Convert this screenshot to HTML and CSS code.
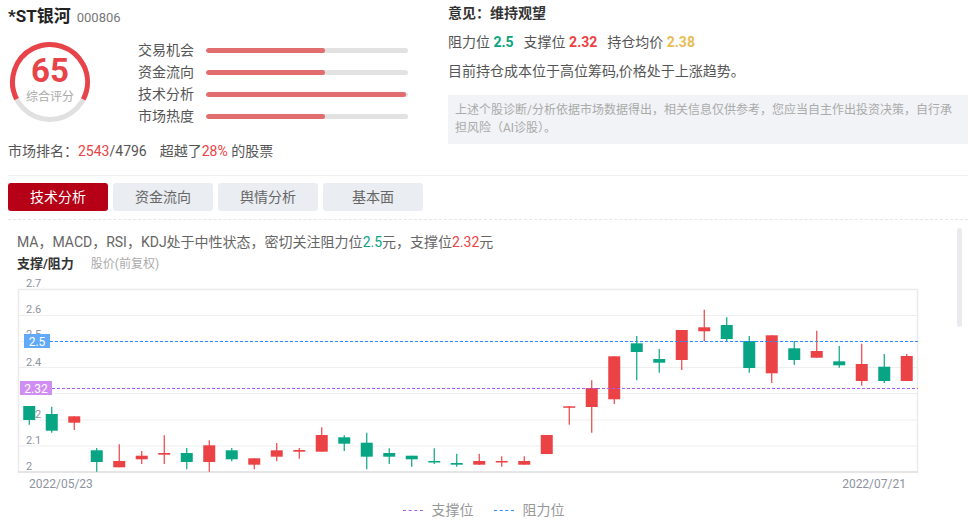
FILE: index.html
```html
<!doctype html>
<html>
<head>
    <meta charset="utf-8"/>
    <title>*ST银河 个股诊断</title>
    <link rel="stylesheet" href="styles.css">
</head>
<body>
<div class="page">

    <div class="summary">
        <div class="summary-left">
            <h1 class="stock-name">*ST银河<span class="stock-code">000806</span></h1>
            <div class="score-row">
                <svg class="gauge" viewBox="0 0 84 84">
                    <circle cx="42" cy="42" r="37.5" class="gauge-bg"/>
                    <circle cx="42" cy="42" r="37.5" class="gauge-val" stroke-dasharray="153.2 300" transform="rotate(153 42 42)"/>
                    <text x="42" y="42" class="gauge-num">65</text>
                    <text x="42" y="61" class="gauge-txt">综合评分</text>
                </svg>
                <ul class="score-list">
                    <li><label>交易机会</label><span class="bar"><i style="width:59%"></i></span></li>
                    <li><label>资金流向</label><span class="bar"><i style="width:59%"></i></span></li>
                    <li><label>技术分析</label><span class="bar"><i style="width:99%"></i></span></li>
                    <li><label>市场热度</label><span class="bar"><i style="width:59%"></i></span></li>
                </ul>
            </div>
            <p class="rank">市场排名：<span class="red">2543</span>/4796<span class="rank-beat">超越了<span class="red">28%</span> 的股票</span></p>
        </div>

        <div class="summary-right">
            <p class="opinion">意见：维持观望</p>
            <p class="levels">阻力位 <b class="green">2.5</b>支撑位 <b class="red">2.32</b>持仓均价 <b class="yellow">2.38</b></p>
            <p class="desc">目前持仓成本位于高位筹码,价格处于上涨趋势。</p>
            <div class="notice">上述个股诊断/分析依据市场数据得出，相关信息仅供参考，您应当自主作出投资决策，自行承担风险（AI诊股）。</div>
        </div>
    </div>

    <div class="tabs">
        <span class="tab active">技术分析</span>
        <span class="tab">资金流向</span>
        <span class="tab">舆情分析</span>
        <span class="tab">基本面</span>
    </div>

    <div class="panel">
        <p class="panel-tip">MA，MACD，RSI，KDJ处于中性状态，密切关注阻力位<span class="green">2.5</span>元，支撑位<span class="red">2.32</span>元</p>
        <h3 class="chart-title">支撑/阻力<span>股价(前复权)</span></h3>

        <svg class="kline" viewBox="8 274 940 221">
            <!-- grid -->
            <g class="grid">
                <line x1="18" y1="315.5" x2="918" y2="315.5"/>
                <line x1="18" y1="341.5" x2="918" y2="341.5"/>
                <line x1="18" y1="367.5" x2="918" y2="367.5"/>
                <line x1="18" y1="393.5" x2="918" y2="393.5"/>
                <line x1="18" y1="420" x2="918" y2="420"/>
                <line x1="18" y1="446" x2="918" y2="446"/>
            </g>
            <rect class="frame" x="18.5" y="289.5" width="899" height="182.5"/>
            <line class="axis" x1="18" y1="472" x2="918" y2="472"/>

            <g class="ylabel">
                <text x="26" y="287">2.7</text>
                <text x="26" y="313">2.6</text>
                <text x="26" y="338">2.5</text>
                <text x="26" y="365.5">2.4</text>
                <text x="26" y="418">2.2</text>
                <text x="26" y="444">2.1</text>
                <text x="26" y="470">2</text>
            </g>
            <g class="xlabel">
                <text x="29" y="488">2022/05/23</text>
                <text x="906" y="488" text-anchor="end">2022/07/21</text>
            </g>

            <!-- candles: rise = red, fall = green -->
            <g class="fall"><line x1="29.25" y1="406" x2="29.25" y2="424.7"/><rect x="23.25" y="406" width="12" height="14"/></g>
            <g class="fall"><line x1="51.75" y1="406.7" x2="51.75" y2="432.7"/><rect x="45.75" y="414" width="12" height="16.7"/></g>
            <g class="rise"><line x1="74.25" y1="416.3" x2="74.25" y2="430"/><rect x="68.25" y="416.3" width="12" height="6.4"/></g>
            <g class="fall"><line x1="96.75" y1="448" x2="96.75" y2="471.7"/><rect x="90.75" y="450.3" width="12" height="11.7"/></g>
            <g class="rise"><line x1="119.25" y1="444.3" x2="119.25" y2="467.3"/><rect x="113.25" y="461" width="12" height="6.3"/></g>
            <g class="rise"><line x1="141.75" y1="451" x2="141.75" y2="464"/><rect x="135.75" y="455.7" width="12" height="3.6"/></g>
            <g class="rise"><line x1="164.25" y1="435.3" x2="164.25" y2="464"/><rect x="158.25" y="453" width="12" height="1.7"/></g>
            <g class="fall"><line x1="186.75" y1="448" x2="186.75" y2="469.3"/><rect x="180.75" y="453" width="12" height="9"/></g>
            <g class="rise"><line x1="209.25" y1="440.3" x2="209.25" y2="471.7"/><rect x="203.25" y="445.3" width="12" height="16.7"/></g>
            <g class="fall"><line x1="231.75" y1="448" x2="231.75" y2="461.3"/><rect x="225.75" y="450.3" width="12" height="9"/></g>
            <g class="rise"><line x1="254.25" y1="458.3" x2="254.25" y2="469.3"/><rect x="248.25" y="458.3" width="12" height="6.4"/></g>
            <g class="rise"><line x1="276.75" y1="443" x2="276.75" y2="461.3"/><rect x="270.75" y="450.3" width="12" height="6.4"/></g>
            <g class="rise"><line x1="299.25" y1="448" x2="299.25" y2="458.7"/><rect x="293.25" y="450" width="12" height="1.7"/></g>
            <g class="rise"><line x1="321.75" y1="427.3" x2="321.75" y2="451.7"/><rect x="315.75" y="435" width="12" height="16.7"/></g>
            <g class="fall"><line x1="344.25" y1="435.3" x2="344.25" y2="451"/><rect x="338.25" y="437.3" width="12" height="6.4"/></g>
            <g class="fall"><line x1="366.75" y1="432.7" x2="366.75" y2="469.3"/><rect x="360.75" y="442.7" width="12" height="14"/></g>
            <g class="fall"><line x1="389.25" y1="448.3" x2="389.25" y2="464"/><rect x="383.25" y="453" width="12" height="3.7"/></g>
            <g class="fall"><line x1="411.75" y1="455.7" x2="411.75" y2="466.7"/><rect x="405.75" y="455.7" width="12" height="3.6"/></g>
            <g class="fall"><line x1="434.25" y1="448.3" x2="434.25" y2="464"/><rect x="428.25" y="461" width="12" height="1.5"/></g>
            <g class="fall"><line x1="456.75" y1="453.7" x2="456.75" y2="466.7"/><rect x="450.75" y="463" width="12" height="1.7"/></g>
            <g class="rise"><line x1="479.25" y1="453.7" x2="479.25" y2="464.7"/><rect x="473.25" y="461" width="12" height="3.7"/></g>
            <g class="rise"><line x1="501.75" y1="456.3" x2="501.75" y2="466.7"/><rect x="495.75" y="461" width="12" height="1.5"/></g>
            <g class="rise"><line x1="524.25" y1="456.3" x2="524.25" y2="464.7"/><rect x="518.25" y="461" width="12" height="3.7"/></g>
            <g class="rise"><rect x="540.75" y="435" width="12" height="19"/></g>
            <g class="rise"><line x1="569.25" y1="406.3" x2="569.25" y2="424.7"/><rect x="563.25" y="406.3" width="12" height="1.5"/></g>
            <g class="rise"><line x1="591.75" y1="380.3" x2="591.75" y2="432.7"/><rect x="585.75" y="388" width="12" height="19"/></g>
            <g class="rise"><line x1="614.25" y1="356.3" x2="614.25" y2="404"/><rect x="608.25" y="356.3" width="12" height="43"/></g>
            <g class="fall"><line x1="636.75" y1="336" x2="636.75" y2="380.3"/><rect x="630.75" y="343.3" width="12" height="8.7"/></g>
            <g class="fall"><line x1="659.25" y1="349" x2="659.25" y2="372.7"/><rect x="653.25" y="359" width="12" height="3.7"/></g>
            <g class="rise"><line x1="681.75" y1="330" x2="681.75" y2="370"/><rect x="675.75" y="330" width="12" height="30"/></g>
            <g class="rise"><line x1="704.25" y1="309.7" x2="704.25" y2="341.3"/><rect x="698.25" y="327.3" width="12" height="4"/></g>
            <g class="fall"><line x1="726.75" y1="317.3" x2="726.75" y2="341.3"/><rect x="720.75" y="325" width="12" height="14"/></g>
            <g class="fall"><line x1="749.25" y1="336" x2="749.25" y2="372.7"/><rect x="743.25" y="341" width="12" height="27"/></g>
            <g class="rise"><line x1="771.75" y1="335.3" x2="771.75" y2="383"/><rect x="765.75" y="335.3" width="12" height="38"/></g>
            <g class="fall"><line x1="794.25" y1="341" x2="794.25" y2="365"/><rect x="788.25" y="348.3" width="12" height="11.7"/></g>
            <g class="rise"><line x1="816.75" y1="330.7" x2="816.75" y2="357.7"/><rect x="810.75" y="351" width="12" height="6.7"/></g>
            <g class="fall"><line x1="839.25" y1="346" x2="839.25" y2="367.7"/><rect x="833.25" y="361.3" width="12" height="4"/></g>
            <g class="rise"><line x1="861.75" y1="343.7" x2="861.75" y2="385.7"/><rect x="855.75" y="364" width="12" height="17"/></g>
            <g class="fall"><line x1="884.25" y1="354" x2="884.25" y2="383"/><rect x="878.25" y="366.7" width="12" height="14.3"/></g>
            <g class="rise"><line x1="906.75" y1="354" x2="906.75" y2="381"/><rect x="900.75" y="356" width="12" height="25"/></g>

            <!-- support / resistance -->
            <line class="line-resist" x1="50" y1="341.5" x2="918" y2="341.5"/>
            <line class="line-support" x1="52" y1="388.5" x2="918" y2="388.5"/>
            <rect class="tag-resist" x="24" y="334" width="26" height="14"/>
            <text class="tag-text" x="37" y="345.5">2.5</text>
            <rect class="tag-support" x="20" y="381" width="32" height="14"/>
            <text class="tag-text" x="36" y="392.5">2.32</text>
        </svg>

        <div class="legend">
            <span class="legend-item"><i class="dash dash-support"></i>支撑位</span>
            <span class="legend-item"><i class="dash dash-resist"></i>阻力位</span>
        </div>

        <div class="scroll-thumb"></div>
    </div>

</div>
</body>
</html>
```

FILE: styles.css
```css
*{margin:0;padding:0;box-sizing:border-box}
body{font-family:Roboto,"Noto Sans CJK SC",sans-serif;font-size:14px;color:#555;background:#fff}
.page{padding:0 4px 0 8px}

.red{color:#eb4245}
.green{color:#0aa37f}
.yellow{color:#e9bb55}

/* summary */
.summary{display:flex;padding-bottom:14px;border-bottom:1px solid #eee}
.summary-left{width:440px}
.summary-right{flex:1;padding-top:3px}

.stock-name{height:20px;margin-top:6px;font-size:17px;line-height:20px;font-weight:bold;color:#222;overflow:hidden}
.stock-code{margin-left:6px;font-size:13px;line-height:20px;font-weight:normal;color:#777}

.score-row{display:flex;margin-top:13px}
.gauge{flex:none;width:84px;height:84px;margin-top:1px}
.gauge circle{fill:none;stroke-width:5}
.gauge-bg{stroke:#e0e0e0}
.gauge-val{stroke:#e9434a}
.gauge-num{font-size:33px;font-weight:bold;fill:#e9434a;text-anchor:middle}
.gauge-txt{font-size:12px;fill:#aaa;text-anchor:middle}

.score-list{list-style:none;margin-left:46px}
.score-list li{display:flex;align-items:center;height:22px}
.score-list label{width:68px;line-height:22px;color:#555}
.bar{width:202px;height:5px;border-radius:3px;background:#e2e2e2;overflow:hidden}
.bar i{display:block;height:100%;border-radius:3px;background:#e26d6e}

.rank{margin-top:14px;line-height:20px}
.rank-beat{margin-left:13px}

.opinion{line-height:20px;font-weight:bold;color:#333}
.levels{margin-top:9px;line-height:20px}
.levels b{margin-right:10px}
.desc{margin-top:9px;line-height:20px}
.notice{margin-top:14px;padding:6px 7px 7px;font-size:12px;line-height:18px;color:#aaa;background:#f1f3f6}

/* tabs */
.tabs{display:flex;gap:5px;padding:7px 0 8px;border-bottom:1px dashed #e6e6e6}
.tab{width:100px;height:28px;line-height:28px;text-align:center;border-radius:3px;background:#eaedf2;color:#666}
.tab.active{background:#b50016;color:#fff}

/* chart panel */
.panel{position:relative}
.panel-tip{padding:12px 0 0 9px;line-height:20px;color:#666}
.chart-title{margin-top:2px;padding-left:9px;font-size:13px;line-height:20px;color:#333}
.chart-title span{margin-left:17px;font-size:12px;font-weight:normal;color:#aaa}

.kline{display:block;width:940px;height:221px}
.kline .grid line{stroke:#eee;stroke-width:1}
.kline .frame{fill:none;stroke:#ebebeb;stroke-width:1.5}
.kline .axis{stroke:#e2e2e2;stroke-width:1.5}
.kline .ylabel text{font-size:11px;fill:#8d93a0}
.kline .xlabel text{font-size:12px;fill:#8d93a0}
.kline .rise line{stroke:#eb4245;stroke-width:1.2}
.kline .rise rect{fill:#eb4245}
.kline .fall line{stroke:#07a584;stroke-width:1.2}
.kline .fall rect{fill:#07a584}
.line-resist{stroke:#2b8cff;stroke-width:1;stroke-dasharray:3 2}
.line-support{stroke:#a75be8;stroke-width:1;stroke-dasharray:3 2}
.tag-resist{fill:#62aaf7}
.tag-support{fill:#d08ef3}
.tag-text{font-size:12px;fill:#fff;text-anchor:middle}

.legend{display:flex;justify-content:center;margin-top:5px;padding-right:9px;line-height:20px;color:#999}
.legend-item{display:flex;align-items:center;margin:0 10px}
.dash{display:block;width:20px;margin-right:9px;border-top:1px dashed}
.dash-support{border-color:#a75be8}
.dash-resist{border-color:#2b8cff}

.scroll-thumb{position:absolute;top:8px;right:6px;width:5px;height:99px;border-radius:3px;background:#e9ebef}
```
